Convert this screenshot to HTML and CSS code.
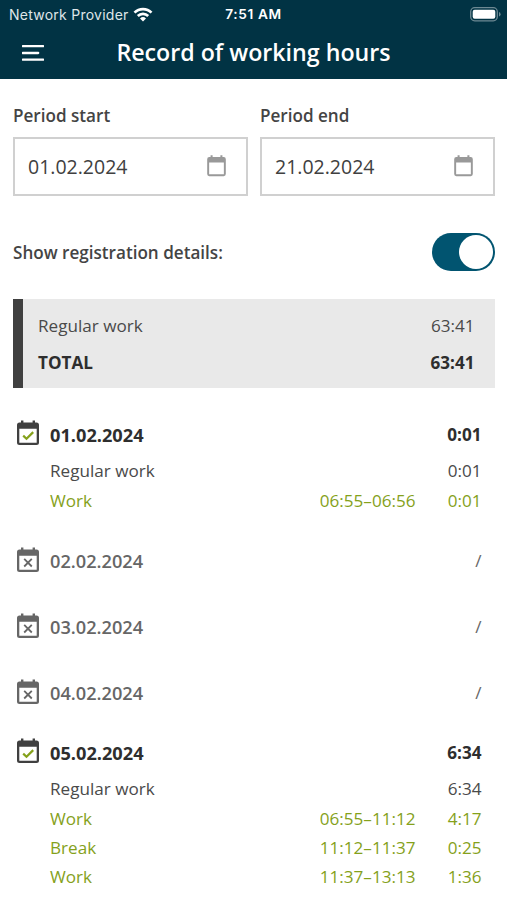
FILE: index.html
```html
<!DOCTYPE html>
<html lang="en">
<head>
<meta charset="utf-8">
<title>Record of working hours</title>
<link rel="stylesheet" href="styles.css">
</head>
<body>
<svg class="defs" width="0" height="0" aria-hidden="true">
  <symbol id="cal" viewBox="0 0 24 26">
    <path fill="currentColor" fill-rule="evenodd" d="M5 .4h2.400v2.100h9.200V.4H19v2.100h1.500A2.500 2.500 0 0 1 23 5v17.500A2.500 2.500 0 0 1 20.500 25h-17A2.500 2.500 0 0 1 1 22.500V5a2.500 2.500 0 0 1 2.500-2.500H5zM3.300 8.800v13.900h17.400V8.800z"/>
  </symbol>
  <symbol id="cal-check" viewBox="0 0 24 26">
    <use href="#cal"/><path d="M7.200 15.600l3.300 3.200 6.700-6.700" fill="none" stroke="#85a11b" stroke-width="2.200"/>
  </symbol>
  <symbol id="cal-x" viewBox="0 0 24 26">
    <use href="#cal"/><path d="M8.200 11.900l7.600 7.600M15.800 11.900l-7.600 7.600" fill="none" stroke="currentColor" stroke-width="1.800"/>
  </symbol>
</svg>
<div class="screen">
  <header class="top">
    <div class="status">
      <div class="carrier"><span>Network Provider</span>
        <svg class="wifi" viewBox="0 0 20 15"><g fill="none" stroke="#fff" stroke-width="2.700"><path d="M1.500 5.600a12 12 0 0 1 17 0"/><path d="M4.800 9a7.400 7.400 0 0 1 10.400 0"/></g><path fill="#fff" d="M10 14.500l-3-3a4.300 4.300 0 0 1 6 0z"/></svg>
      </div>
      <span class="clock">7:51 AM</span>
      <svg class="battery" viewBox="0 0 31 15"><rect x=".7" y=".7" width="26.600" height="13.100" rx="4" fill="none" stroke="#6d8993" stroke-width="1.300"/><rect x="2.700" y="2.700" width="22.600" height="9.100" rx="2" fill="#fff"/><path d="M29 5v4.500q1.600-.5 1.600-2.250T29 5z" fill="#6d8993"/></svg>
    </div>
    <div class="bar">
      <svg class="menu" viewBox="0 0 22 16"><path d="M.8 1.200h20.400M.8 8h15.400M.8 14.600h20.400" stroke="#fff" stroke-width="2.300" stroke-linecap="round"/></svg>
      <h1>Record of working hours</h1>
    </div>
  </header>
  <main>
    <div class="period">
      <div class="field"><label>Period start</label><div class="input"><span>01.02.2024</span><svg><use href="#cal"/></svg></div></div>
      <div class="field"><label>Period end</label><div class="input"><span>21.02.2024</span><svg><use href="#cal"/></svg></div></div>
    </div>
    <div class="details"><span>Show registration details:</span><div class="switch"><i></i></div></div>
    <section class="summary">
      <div><span>Regular work</span><span>63:41</span></div>
      <div class="total"><span>TOTAL</span><span>63:41</span></div>
    </section>
    <section class="day">
      <div class="head"><svg><use href="#cal-check"/></svg><b>01.02.2024</b><b class="hours">0:01</b></div>
      <div class="row sum"><span>Regular work</span><span></span><span>0:01</span></div>
      <div class="row"><span>Work</span><span>06:55–06:56</span><span>0:01</span></div>
    </section>
    <section class="day off first"><div class="head"><svg><use href="#cal-x"/></svg><b>02.02.2024</b><span>/</span></div></section>
    <section class="day off"><div class="head"><svg><use href="#cal-x"/></svg><b>03.02.2024</b><span>/</span></div></section>
    <section class="day off"><div class="head"><svg><use href="#cal-x"/></svg><b>04.02.2024</b><span>/</span></div></section>
    <section class="day">
      <div class="head"><svg><use href="#cal-check"/></svg><b>05.02.2024</b><b class="hours">6:34</b></div>
      <div class="row sum"><span>Regular work</span><span></span><span>6:34</span></div>
      <div class="row"><span>Work</span><span>06:55–11:12</span><span>4:17</span></div>
      <div class="row"><span>Break</span><span>11:12–11:37</span><span>0:25</span></div>
      <div class="row"><span>Work</span><span>11:37–13:13</span><span>1:36</span></div>
    </section>
  </main>
</div>
</body>
</html>
```
FILE: styles.css
```css
* { box-sizing: border-box; }
body { margin: 0; background: #fff; font-family: "Open Sans", sans-serif; font-size: 17.1px; color: #4a4a4a; }
.defs { display: block; height: 0; }
.screen { height: 900px; overflow: hidden; }
.top { height: 79px; background: #013344; color: #fff; }
.status { display: grid; grid-template-columns: 1fr auto 1fr; height: 27px; padding: 0 7px 0 7px; align-items: center; font: 14px/27px Inter, sans-serif; }
.carrier { display: flex; align-items: center; gap: 4px; padding-left: 2px; letter-spacing: .25px; color: #dfe6e9; }
.wifi { width: 20px; height: 15px; }
.clock { font-weight: 600; font-size: 13.7px; letter-spacing: .6px; padding-top: 1px; }
.battery { width: 31px; height: 15px; justify-self: end; margin-right: -1px; }
.bar { display: grid; grid-template-columns: 1fr auto 1fr; align-items: center; height: 52px; padding: 0 22px; }
.menu { width: 22px; height: 16px; margin-top: -1px; }
h1 { margin: 0; font-size: 23.2px; font-weight: 600; line-height: 50px; margin-top: -2px; }
main { padding: 24px 12px 0 13px; }
.period { display: grid; grid-template-columns: 1fr 1fr; gap: 12px; }
.field label { display: block; font-weight: 600; line-height: 26px; color: #444; }
.input { display: flex; align-items: center; justify-content: space-between; height: 59px; margin-top: 8px; padding: 0 19.5px 0 13px; border: 2px solid #d0d0d0; font-size: 19.5px; }
.input span { padding-bottom: 1px; color: #404040; }
.input svg { width: 21px; height: 22px; margin-top: -2px; color: #999; }
.details { display: flex; align-items: center; justify-content: space-between; height: 38px; margin-top: 37px; font-weight: 600; color: #444; }
.switch { display: flex; justify-content: flex-end; width: 63px; height: 38px; padding: 2px; border-radius: 19px; background: #015470; }
.switch i { width: 34px; height: 34px; border-radius: 50%; background: #fff; }
.summary { height: 89px; margin-top: 28px; padding: 9px 20.5px 0 15px; border-left: 10px solid #404040; background: #e9e9e9; }
.summary div { display: flex; justify-content: space-between; line-height: 36px; }
.summary .total { font-weight: 700; color: #2e2e2e; padding-top: .5px; }
.day { margin-top: 23px; padding: 0 13.5px 0 3px; }
.summary + .day { margin-top: 28.3px; }
.off { margin-top: 29px; }
.off.first { margin-top: 27px; }
.head { display: grid; grid-template-columns: 24px 1fr auto; column-gap: 10px; align-items: center; height: 37px; }
.head svg { width: 24px; height: 26px; margin-top: -3px; color: #404040; }
.head b { font-size: 18.2px; font-weight: 700; color: #2e2e2e; }
.head .hours { font-size: 17.1px; }
.off .head svg, .off .head b, .off .head span { color: #666; }
.off .head svg { margin-top: -1px; }
.off .head b { font-weight: 600; }
.row { display: grid; grid-template-columns: 1fr auto 66px; padding-left: 34px; line-height: 29.3px; color: #85a11b; }
.row span:last-child { text-align: right; }
.row.sum { padding-top: 3.2px; color: #4a4a4a; }
```
